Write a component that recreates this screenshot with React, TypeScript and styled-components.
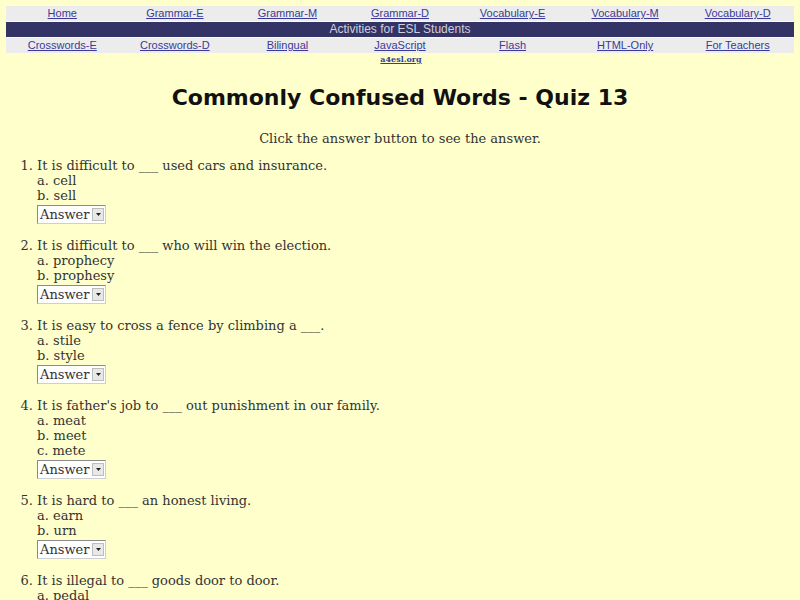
import React from 'react';
import styled, { createGlobalStyle } from 'styled-components';

const GlobalStyle = createGlobalStyle`
  html, body {
    margin: 0;
    padding: 0;
    background: #ffffcc;
  }
  body {
    padding: 6px;
    font-family: "DejaVu Serif", serif;
    color: #333333;
  }
`;

const topLinks = ['Home', 'Grammar-E', 'Grammar-M', 'Grammar-D', 'Vocabulary-E', 'Vocabulary-M', 'Vocabulary-D'];
const bottomLinks = ['Crosswords-E', 'Crosswords-D', 'Bilingual', 'JavaScript', 'Flash', 'HTML-Only', 'For Teachers'];

const questions = [
  { text: 'It is difficult to ___ used cars and insurance.', options: ['cell', 'sell'] },
  { text: 'It is difficult to ___ who will win the election.', options: ['prophecy', 'prophesy'] },
  { text: 'It is easy to cross a fence by climbing a ___.', options: ['stile', 'style'] },
  { text: "It is father's job to ___ out punishment in our family.", options: ['meat', 'meet', 'mete'] },
  { text: 'It is hard to ___ an honest living.', options: ['earn', 'urn'] },
  { text: 'It is illegal to ___ goods door to door.', options: ['pedal', 'peddle'] },
];

const Nav = styled.div`
  display: flex;
  flex-direction: column;
  gap: 1px;
  font-family: "Liberation Sans", Arial, sans-serif;
  font-size: 11px;
`;

const LinkRow = styled.div`
  display: grid;
  grid-template-columns: repeat(7, 1fr);
  background: #ececec;
  height: 15px;
  align-items: center;
`;

const NavLink = styled.a`
  text-align: center;
  color: #3a3a98;
  text-decoration: underline;
  line-height: 15px;
`;

const Banner = styled.div`
  background: #333366;
  color: #d0d0dc;
  text-align: center;
  font-size: 12px;
  height: 15px;
  line-height: 15px;
`;

const SiteTag = styled.a`
  display: block;
  text-align: center;
  font-size: 8px;
  font-weight: bold;
  color: #3a3a98;
  text-decoration: underline;
  margin-top: 1px;
  padding-left: 2px;
`;

const Title = styled.h1`
  margin: 21px 0 0;
  text-align: center;
  font-family: "Comic Sans MS", "DejaVu Sans", sans-serif;
  font-weight: bold;
  font-size: 22px;
  color: #111111;
`;

const Intro = styled.p`
  margin: 21px 0 0;
  text-align: center;
  font-size: 13px;
`;

const List = styled.ol`
  margin: 12px 0 0;
  padding-left: 31px;
  font-size: 13px;
  line-height: 15px;
`;

const Item = styled.li`
  margin-bottom: 14px;
`;

const Option = styled.div``;

const AnswerBox = styled.div`
  display: inline-flex;
  align-items: center;
  margin-top: 2px;
  height: 17px;
  border: 1px solid #8a8a8a;
  border-right-color: #cfcfcf;
  border-bottom-color: #cfcfcf;
  background: #ffffff;
  padding-left: 2px;
  font-size: 13px;
  color: #333333;
`;

const Arrow = styled.span`
  display: inline-flex;
  align-items: center;
  justify-content: center;
  width: 12px;
  height: 13px;
  margin: 0 1px 0 3px;
  background: #e8e8e8;
  border: 1px solid #bdbdbd;
  box-sizing: border-box;
`;

const Answer: React.FC = () => (
  <AnswerBox>
    Answer
    <Arrow>
      <svg width="5" height="3" viewBox="0 0 5 3">
        <path d="M0 0 L5 0 L2.5 3 Z" fill="#222" />
      </svg>
    </Arrow>
  </AnswerBox>
);

const App: React.FC = () => {
  const letters = ['a', 'b', 'c', 'd'];
  return (
    <>
      <GlobalStyle />
      <Nav>
        <LinkRow>
          {topLinks.map((l) => (
            <NavLink key={l}>{l}</NavLink>
          ))}
        </LinkRow>
        <Banner>Activities for ESL Students</Banner>
        <LinkRow>
          {bottomLinks.map((l) => (
            <NavLink key={l}>{l}</NavLink>
          ))}
        </LinkRow>
      </Nav>
      <SiteTag>a4esl.org</SiteTag>
      <Title>Commonly Confused Words - Quiz 13</Title>
      <Intro>Click the answer button to see the answer.</Intro>
      <List>
        {questions.map((q) => (
          <Item key={q.text}>
            {q.text}
            {q.options.map((o, i) => (
              <Option key={o}>
                {letters[i]}. {o}
              </Option>
            ))}
            <Answer />
          </Item>
        ))}
      </List>
    </>
  );
};

export default App;
